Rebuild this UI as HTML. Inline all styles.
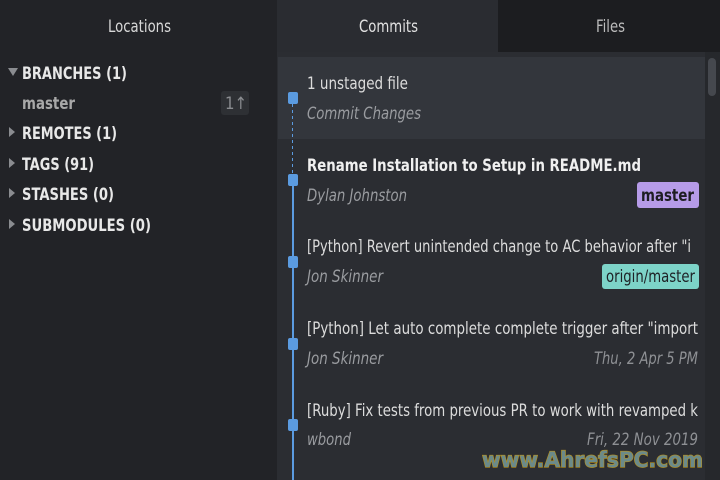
<!DOCTYPE html>
<html><head><style>
body{margin:0;width:720px;height:480px;overflow:hidden;background:#2b2d32}
svg{display:block;font-family:"DejaVu Sans","Liberation Sans",sans-serif}
</style></head><body>
<svg width="720" height="480" viewBox="0 0 720 480" xmlns="http://www.w3.org/2000/svg">
<defs><clipPath id="c"><rect x="300" y="0" width="398" height="480"/></clipPath></defs>
<rect x="0" y="0" width="277" height="480" fill="#222327"/>
<rect x="277" y="0" width="221" height="52" fill="#2a2c31"/>
<rect x="498" y="0" width="222" height="52" fill="#1c1d20"/>
<rect x="278" y="57" width="427" height="82" fill="#33363c"/>
<rect x="705" y="52" width="15" height="428" fill="#26282c"/>
<rect x="708" y="58" width="8" height="38" rx="4" fill="#45484e"/>
<g font-size="17" lengthAdjust="spacingAndGlyphs">
<text x="108" y="32" textLength="63" lengthAdjust="spacingAndGlyphs" fill="#d8d8d8">Locations</text>
<text x="359" y="32" textLength="59" lengthAdjust="spacingAndGlyphs" fill="#e0e0e0">Commits</text>
<text x="596" y="32" textLength="29" lengthAdjust="spacingAndGlyphs" fill="#bcbcbc">Files</text>
</g>
<polygon points="8,68 18,68 13,76" fill="#8a8c90"/>
<polygon points="9,127 15,132 9,137" fill="#8a8c90"/>
<polygon points="9,158 15,163 9,168" fill="#8a8c90"/>
<polygon points="9,188 15,193 9,198" fill="#8a8c90"/>
<polygon points="9,219 15,224 9,229" fill="#8a8c90"/>
<g font-size="17" font-weight="bold" fill="#e8e8e8">
<text x="22" y="79" textLength="105" lengthAdjust="spacingAndGlyphs">BRANCHES (1)</text>
<text x="22" y="139" textLength="95" lengthAdjust="spacingAndGlyphs">REMOTES (1)</text>
<text x="22" y="170" textLength="72" lengthAdjust="spacingAndGlyphs">TAGS (91)</text>
<text x="22" y="200" textLength="92" lengthAdjust="spacingAndGlyphs">STASHES (0)</text>
<text x="22" y="231" textLength="129" lengthAdjust="spacingAndGlyphs">SUBMODULES (0)</text>
<text x="22" y="109" textLength="53" lengthAdjust="spacingAndGlyphs" fill="#a8a8a8">master</text>
</g>
<rect x="221" y="91" width="28" height="24" rx="3" fill="#2e3034"/>
<text x="225" y="109" font-size="17" textLength="22" lengthAdjust="spacingAndGlyphs" fill="#8a8c90">1↑</text>

<line x1="292.5" y1="104" x2="292.5" y2="176" stroke="#5b9be0" stroke-width="1" stroke-dasharray="3,3"/>
<rect x="292" y="186" width="2" height="294" fill="#5b9be0"/>
<g fill="#5b9be0">
<rect x="288" y="92" width="10" height="12" rx="2"/>
<rect x="288" y="174" width="10" height="12" rx="2"/>
<rect x="288" y="256" width="10" height="12" rx="2"/>
<rect x="288" y="338" width="10" height="12" rx="2"/>
<rect x="288" y="419" width="10" height="12" rx="2"/>
</g>
<g font-size="17" clip-path="url(#c)">
<text x="307" y="89" textLength="101" lengthAdjust="spacingAndGlyphs" fill="#dcdcdc">1 unstaged file</text>
<text x="307" y="119" textLength="114" lengthAdjust="spacingAndGlyphs" fill="#9a9ca0" font-style="italic">Commit Changes</text>
<text x="307" y="171" textLength="334" lengthAdjust="spacingAndGlyphs" fill="#f0f0f0" font-weight="bold">Rename Installation to Setup in README.md</text>
<text x="307" y="201" textLength="100" lengthAdjust="spacingAndGlyphs" fill="#9a9ca0" font-style="italic">Dylan Johnston</text>
<text x="307" y="252" textLength="384" lengthAdjust="spacingAndGlyphs" fill="#dcdcdc">[Python] Revert unintended change to AC behavior after "i</text>
<text x="307" y="282" textLength="76" lengthAdjust="spacingAndGlyphs" fill="#9a9ca0" font-style="italic">Jon Skinner</text>
<text x="307" y="334" textLength="391" lengthAdjust="spacingAndGlyphs" fill="#dcdcdc">[Python] Let auto complete complete trigger after "import</text>
<text x="307" y="364" textLength="76" lengthAdjust="spacingAndGlyphs" fill="#9a9ca0" font-style="italic">Jon Skinner</text>
<text x="594" y="364" textLength="104" lengthAdjust="spacingAndGlyphs" fill="#8e9094" font-style="italic">Thu, 2 Apr 5 PM</text>
<text x="307" y="416" textLength="391" lengthAdjust="spacingAndGlyphs" fill="#dcdcdc">[Ruby] Fix tests from previous PR to work with revamped k</text>
<text x="307" y="445" textLength="44" lengthAdjust="spacingAndGlyphs" fill="#9a9ca0" font-style="italic">wbond</text>
<text x="587" y="445" textLength="111" lengthAdjust="spacingAndGlyphs" fill="#8e9094" font-style="italic">Fri, 22 Nov 2019</text>
</g>
<rect x="637" y="182" width="62" height="26" rx="3" fill="#b69be8"/>
<text x="641" y="201" font-size="17" font-weight="bold" textLength="53" lengthAdjust="spacingAndGlyphs" fill="#1e1e22">master</text>
<rect x="602" y="264" width="97" height="25" rx="3" fill="#7dd3c8"/>
<text x="606" y="282" font-size="17" textLength="89" lengthAdjust="spacingAndGlyphs" fill="#1e2226">origin/master</text>
<text x="482" y="467" font-size="21" font-weight="bold" textLength="221" lengthAdjust="spacingAndGlyphs" fill="#6b8a8a" stroke="#b8901a" stroke-width="1.2" paint-order="stroke">www.AhrefsPC.com</text>
</svg>
</body></html>
